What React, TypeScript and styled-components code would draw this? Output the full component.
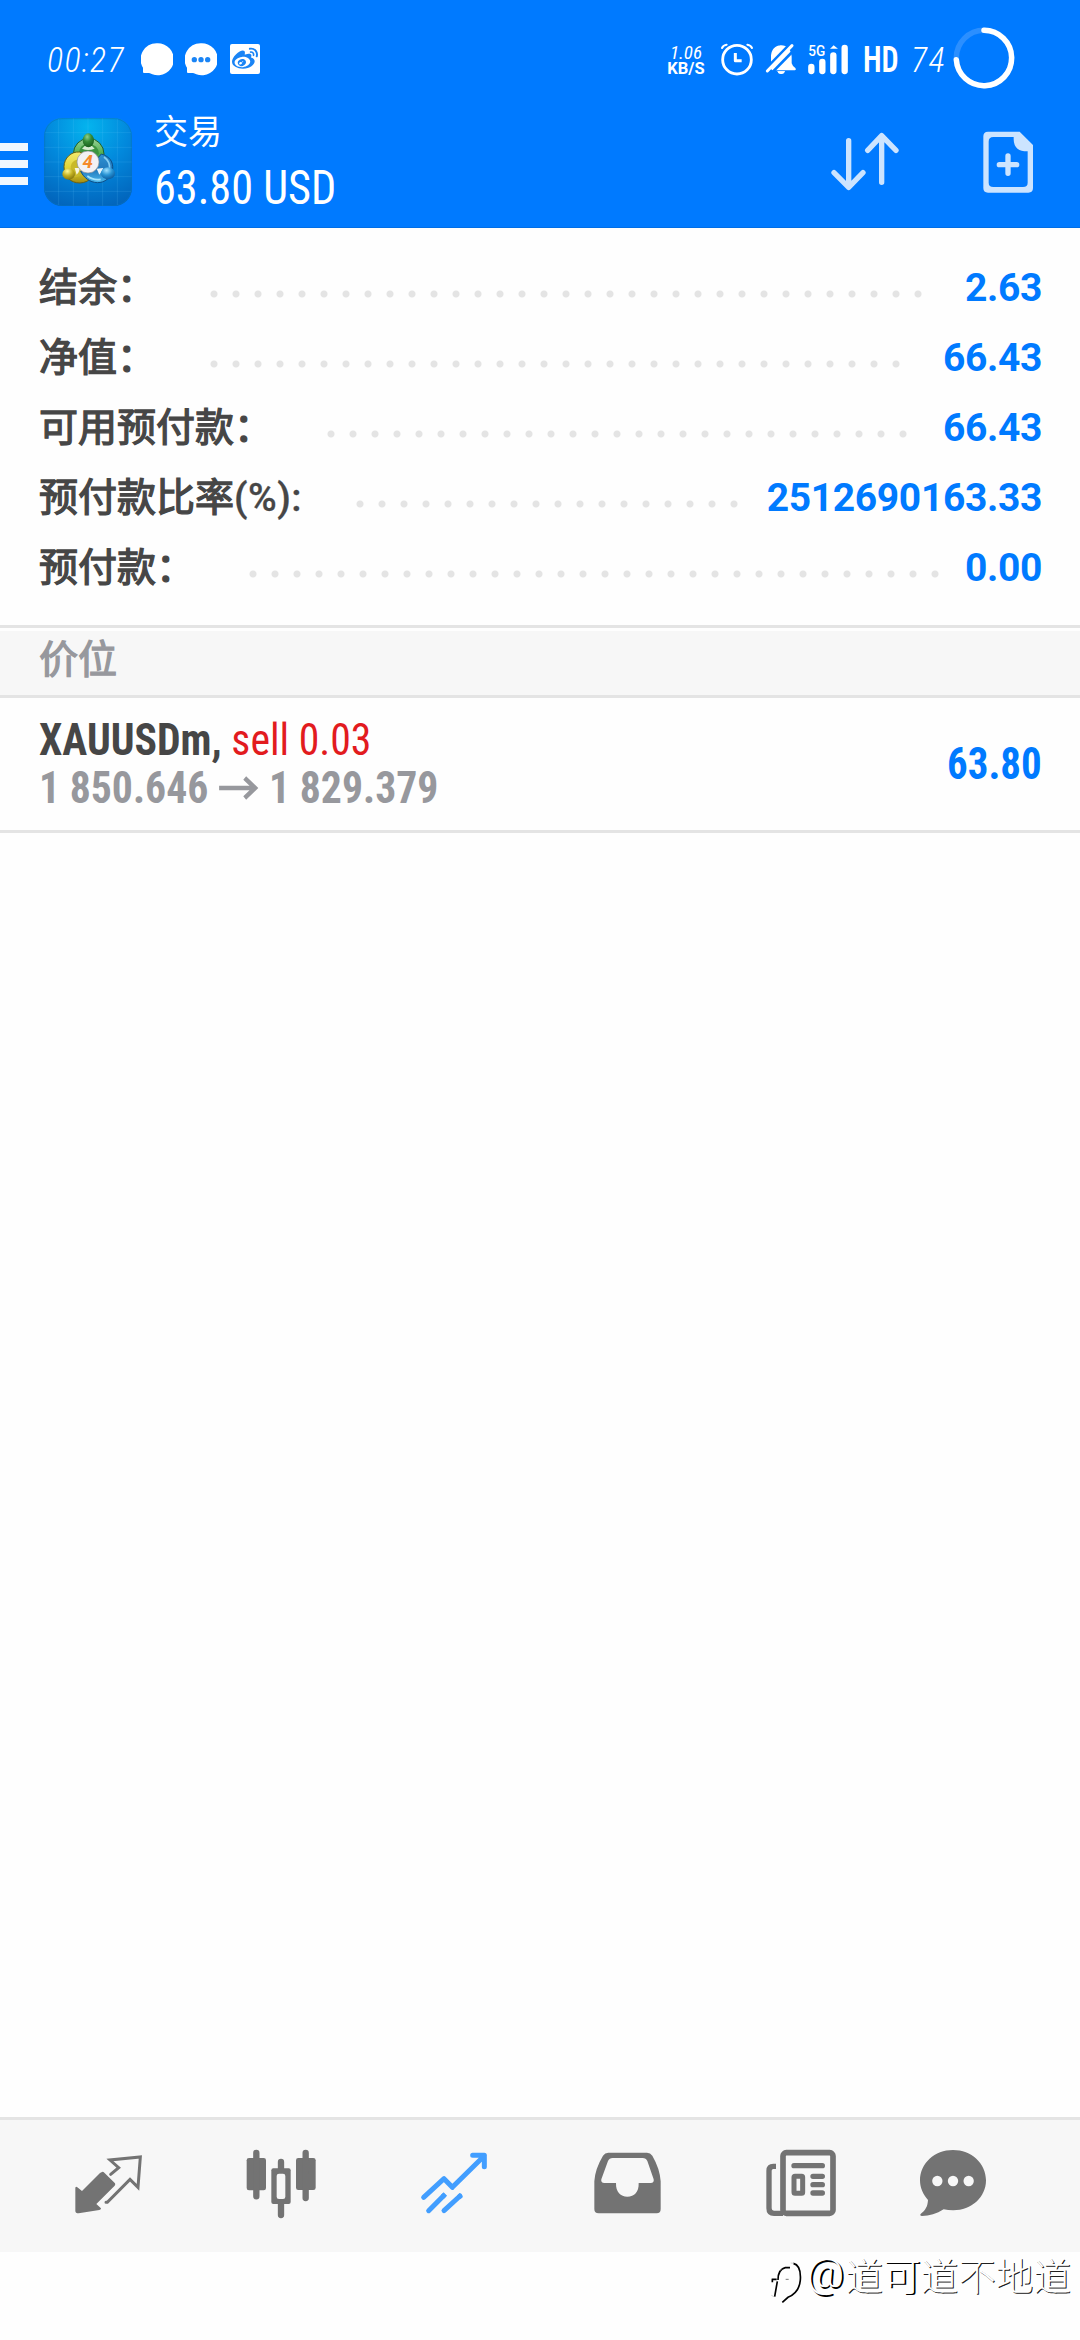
import React from 'react';
import styled, { createGlobalStyle } from 'styled-components';
import { FaWeibo } from 'react-icons/fa6';

const GlobalStyle = createGlobalStyle`
  * { box-sizing: border-box; }
  body { margin: 0; background: #fff; }
`;

const Screen = styled.div`
  display: flex;
  flex-direction: column;
  width: 1080px;
  height: 2340px;
  overflow: hidden;
  background: #fefefe;
  font-family: Roboto, 'Noto Sans CJK SC', sans-serif;
`;

const Header = styled.header`
  height: 228px;
  background: #007aff;
  border-bottom: 1px solid #006ee6;
  color: #fff;
`;

const StatusBar = styled.div`
  display: flex;
  align-items: center;
  height: 118px;
  padding-left: 47px;
`;

const Clock = styled.span<{ $width: number; $gap?: number }>`
  flex: none;
  width: ${p => p.$width}px;
  margin: 2px 0 0 ${p => p.$gap ?? 0}px;
  font: italic 300 34px/1 'Roboto Condensed', Roboto, sans-serif;
  font-stretch: 75%;
  letter-spacing: 1.4px;
  white-space: nowrap;
`;

const Glyph = styled.svg<{ $gap?: number }>`
  display: block;
  flex: none;
  margin-left: ${p => p.$gap ?? 0}px;
`;

const WeiboTile = styled.span`
  display: flex;
  flex: none;
  align-items: center;
  justify-content: center;
  width: 30px;
  height: 30px;
  margin-left: 13px;
  border-radius: 2px;
  background: #fff;
  color: #1a84f5;
`;

const NetSpeed = styled.div`
  display: flex;
  flex: none;
  flex-direction: column;
  align-items: center;
  width: 40px;
  margin: 3px 0 0 406px;
  font: 700 16.5px/15px Roboto, sans-serif;
`;

const SpeedValue = styled.span`
  font: italic 400 19px/16px 'Roboto Condensed', Roboto, sans-serif;
  font-stretch: 75%;
`;

const HdLabel = styled.span`
  flex: none;
  width: 36px;
  margin: 2px 0 0 13px;
  font: 600 36px/1 'Roboto Condensed', Roboto, sans-serif;
  font-stretch: 75%;
  transform: scaleX(0.84);
  transform-origin: left;
`;

const AppBar = styled.div`
  display: flex;
  height: 109px;
`;

const MenuBars = styled.div`
  display: flex;
  flex-direction: column;
  gap: 9px;
  width: 28px;
  padding-top: 25px;
`;

const MenuBar = styled.span`
  height: 8px;
  background: #f0f7ff;
`;

const Titles = styled.div`
  display: flex;
  flex-direction: column;
  width: 600px;
  margin-left: 22px;
`;

const ScreenName = styled.span`
  height: 46px;
  font: 400 34px/24px 'Noto Sans CJK SC', sans-serif;
`;

const Condensed = styled.span<{ $size: number; $weight: number; $color?: string; $squeeze?: number; $origin?: string }>`
  display: inline-block;
  font: ${p => p.$weight} ${p => p.$size}px/1 'Roboto Condensed', Roboto, sans-serif;
  font-stretch: 75%;
  color: ${p => p.$color ?? 'inherit'};
  white-space: pre;
  transform: scaleX(${p => p.$squeeze ?? 1});
  transform-origin: ${p => p.$origin ?? 'left'};
`;

const Summary = styled.section`
  display: flex;
  flex-direction: column;
  height: 397px;
  padding: 24px 38px 0 39px;
`;

const SummaryRow = styled.div`
  display: flex;
  align-items: center;
  height: 70px;
  font-size: 39px;
  line-height: 70px;
`;

const Label = styled.span`
  margin-top: 2px;
  color: #464646;
  font-weight: 400;
  -webkit-text-stroke: 1.3px #464646;
  white-space: nowrap;
`;

const Unit = styled.span`
  font-weight: 500;
  letter-spacing: 0.5px;
  -webkit-text-stroke: 0.3px #464646;
`;

const Dots = styled.span<{ $count: number }>`
  width: ${p => p.$count * 22}px;
  height: 8px;
  margin: 14px 0 0 47px;
  background: radial-gradient(circle at center, #e4e4e4 3px, transparent 4px) 0 0 / 22px 8px repeat-x;
`;

const Value = styled.span`
  margin: 2px 0 0 auto;
  color: #007aff;
  font-weight: 700;
  letter-spacing: -0.35px;
`;

const SectionHead = styled.div`
  height: 73px;
  padding: 3px 0 0;
  border-top: 3px solid #e4e4e4;
  border-bottom: 3px solid #e4e4e4;
`;

const SectionTitle = styled.div`
  height: 64px;
  padding-left: 39px;
  background: #f7f7f7;
  color: #97989d;
  font: 400 39px/50px 'Noto Sans CJK SC', sans-serif;
  -webkit-text-stroke: 1.3px #97989d;
`;

const Position = styled.div`
  display: flex;
  align-items: center;
  justify-content: space-between;
  height: 135px;
  padding: 0 38px 0 39px;
  border-bottom: 3px solid #e4e4e4;
`;

const PositionInfo = styled.div`
  display: flex;
  flex-direction: column;
  gap: 3px;
`;

const InfoLine = styled.div`
  display: flex;
  align-items: center;
  height: 45px;
  transform: scaleX(0.948);
  transform-origin: left;
`;

const Blank = styled.main`
  flex: 1;
`;

const Nav = styled.nav`
  display: flex;
  align-items: flex-start;
  height: 135px;
  padding: 26px 0 0 72px;
  border-top: 3px solid #e4e4e4;
  background: #f7f7f7;
`;

const Footer = styled.footer`
  display: flex;
  align-items: flex-start;
  justify-content: flex-end;
  height: 88px;
  padding: 0 9px 0 0;
  background: #fefefe;
`;

const Watermark = styled.span`
  display: flex;
  font: 300 37.6px/44px 'Noto Sans CJK SC', sans-serif;
  color: #fff;
  text-shadow: 1px 1px 0.5px rgba(0, 0, 0, 0.9);
  white-space: nowrap;
`;

const AtSign = styled.span`
  width: 39px;
  font: 300 41px/42px Roboto, sans-serif;
  text-shadow: 2px 1.5px 0.5px #000;
`;

const Deep = styled.span`
  text-shadow: 1.6px 1.2px 0.5px #000;
`;

const rows = [
  { label: '结余：', unit: '', value: '2.63', dots: 33 },
  { label: '净值：', unit: '', value: '66.43', dots: 32 },
  { label: '可用预付款：', unit: '', value: '66.43', dots: 27 },
  { label: '预付款比率', unit: '(%):', value: '2512690163.33', dots: 18 },
  { label: '预付款：', unit: '', value: '0.00', dots: 32 },
];

const GREY = '#737373';

function Logo() {
  return (
    <Glyph $gap={16} width="88" height="88" viewBox="132 294 264 264">
      <defs>
        <radialGradient id="bg" cx="0.5" cy="0.1" r="0.95">
          <stop offset="0" stopColor="#04b4ee" />
          <stop offset="0.5" stopColor="#0288dc" />
          <stop offset="1" stopColor="#0264bb" />
        </radialGradient>
        <linearGradient id="gr" x1="0" y1="0" x2="0" y2="1">
          <stop offset="0" stopColor="#9ad29a" />
          <stop offset="0.5" stopColor="#4fae4c" />
          <stop offset="1" stopColor="#257a28" />
        </linearGradient>
        <linearGradient id="ye" x1="0" y1="0" x2="0" y2="1">
          <stop offset="0" stopColor="#f2ea70" />
          <stop offset="0.6" stopColor="#ddd02c" />
          <stop offset="1" stopColor="#a18a12" />
        </linearGradient>
        <linearGradient id="bl" x1="0" y1="0" x2="0" y2="1">
          <stop offset="0" stopColor="#2f92d2" />
          <stop offset="0.55" stopColor="#2178bd" />
          <stop offset="1" stopColor="#4ab8ec" />
        </linearGradient>
        <radialGradient id="gb" cx="0.4" cy="0.25" r="0.8">
          <stop offset="0" stopColor="#8fd08c" />
          <stop offset="0.45" stopColor="#348b38" />
          <stop offset="1" stopColor="#15591b" />
        </radialGradient>
        <radialGradient id="yb" cx="0.4" cy="0.25" r="0.8">
          <stop offset="0" stopColor="#fff995" />
          <stop offset="0.5" stopColor="#c2b022" />
          <stop offset="1" stopColor="#80700b" />
        </radialGradient>
        <radialGradient id="bb" cx="0.4" cy="0.25" r="0.8">
          <stop offset="0" stopColor="#9fe0ff" />
          <stop offset="0.5" stopColor="#2793d4" />
          <stop offset="1" stopColor="#0b5698" />
        </radialGradient>
      </defs>
      <rect x="132" y="294" width="264" height="264" rx="54" fill="url(#bg)" />
      <rect x="134" y="296" width="260" height="260" rx="52" fill="none" stroke="#0872bd" strokeOpacity="0.6" strokeWidth="3" />
      <path d="M176 297V555M220 295V557M264 295V557M308 295V557M352 297V555M135 338H393M133 382H395M133 426H395M133 470H395M135 514H393" stroke="#6fd0ff" strokeOpacity="0.15" strokeWidth="3" />
      <ellipse cx="266" cy="402" rx="46" ry="47" fill="url(#gr)" stroke="#1f5f2a" strokeWidth="3" />
      <path d="M236 400Q240 372 264 372Q296 374 297 402L264 420Z" fill="#3c9440" />
      <path d="M246 386Q264 394 284 386L276 378H254Z" fill="#d5ecd0" />
      <path d="M238 396C214 394 192 414 192 440C192 470 212 489 240 489C256 488 268 482 274 472L250 400Z" fill="url(#ye)" stroke="#6d6110" strokeWidth="3" />
      <path d="M212 452Q208 424 234 418L246 460Q232 478 216 468Z" fill="#c9b928" />
      <path d="M304 402C330 410 340 426 338 448C334 474 314 488 292 488C270 487 252 474 242 454L262 450Z" fill="url(#bl)" stroke="#0d4d86" strokeWidth="3" />
      <path d="M312 411Q330 424 329 446" fill="none" stroke="#86cdf3" strokeWidth="5" />
      <path d="M262 468Q280 482 302 478" fill="none" stroke="#a4e3fd" strokeWidth="5" />
      <path d="M224 444L240 444Q238 456 230 464Z" fill="#f6f4dd" />
      <path d="M290 446L310 444Q306 454 298 464Z" fill="#e6f4fb" />
      <ellipse cx="265" cy="361" rx="17" ry="21" fill="url(#gb)" />
      <ellipse cx="206" cy="462" rx="19" ry="17" fill="url(#yb)" />
      <ellipse cx="324" cy="460" rx="21" ry="18" fill="url(#bb)" />
      <circle cx="264" cy="426" r="33" fill="#f3f1f4" stroke="#8b8f97" strokeWidth="2" />
      <text x="263" y="445" textAnchor="middle" fontFamily="Roboto" fontWeight="700" fontStyle="italic" fontSize="56" fill="#f58a2b">4</text>
    </Glyph>
  );
}

function StatusIcons() {
  return (
    <>
      <Glyph $gap={20} width="32" height="34" viewBox="423 66 96 102" fill="#fff">
        <path d="M471 70a48 48 0 1 1-14 93c-5-3-9-4-14-4h-11q-3 0-3-3v-13A48 48 0 0 1 471 70Z" />
      </Glyph>
      <Glyph $gap={12} width="32" height="34" viewBox="555 66 96 102" fill="#fff">
        <path d="M603 70a48 48 0 1 1-14 93c-5-3-9-4-14-4h-11q-3 0-3-3v-13A48 48 0 0 1 603 70Z" />
        <g fill="#1a84f5">
          <circle cx="583" cy="119" r="8" />
          <circle cx="603" cy="119" r="8" />
          <circle cx="623" cy="119" r="8" />
        </g>
      </Glyph>
      <WeiboTile><FaWeibo size={26} /></WeiboTile>
    </>
  );
}

function SystemIcons() {
  return (
    <>
      <Glyph $gap={14} width="34" height="34" viewBox="240 96 102 102" fill="none" stroke="#fff" strokeLinecap="round">
        <circle cx="291" cy="149" r="43" strokeWidth="8.5" />
        <path d="M286 129V152H305" strokeWidth="9" strokeLinejoin="round" strokeLinecap="butt" />
        <path d="M246 114Q250 105 260 104M336 114Q332 105 322 104" strokeWidth="6" />
      </Glyph>
      <Glyph $gap={10} width="34" height="34" viewBox="372 96 102 102">
        <path d="M390 171Q393 168 393 162V143C393 108 418 106 424 106C440 106 454 118 455 140V160Q457 168 466 174Q470 180 464 181H396Z" fill="#fff" />
        <path d="M412 184h23a12 11 0 0 1-23 0Z" fill="#fff" />
        <path d="M372 186L460 96" stroke="#007aff" strokeWidth="14" />
        <path d="M388 196L474 108" stroke="#007aff" strokeWidth="8" />
        <path d="M412 184h23a12 11 0 0 1-23 0Z" fill="#fff" />
        <path d="M382 183L456 107" stroke="#fff" strokeWidth="9" strokeLinecap="round" />
      </Glyph>
      <Glyph $gap={8} width="44" height="34" viewBox="498 96 132 102" stroke="#fff" strokeLinecap="round">
        <path d="M514 171V183M547 156V183M580 136V183M614 114V183" strokeWidth="19" />
        <path d="M576 114L581 109L587 114Z" strokeWidth="5" fill="#fff" />
        <text x="505" y="137" fontFamily="Roboto" fontWeight="500" fontSize="44" textLength="51" lengthAdjust="spacingAndGlyphs" fill="#fff" stroke="none">5G</text>
      </Glyph>
    </>
  );
}

export default function App() {
  return (
    <Screen>
      <GlobalStyle />
      <Header>
        <StatusBar>
          <Clock $width={74}>00:27</Clock>
          <StatusIcons />
          <NetSpeed>
            <SpeedValue>1.06</SpeedValue>
            <span>KB/S</span>
          </NetSpeed>
          <SystemIcons />
          <HdLabel>HD</HdLabel>
          <Clock $width={40} $gap={12}>74</Clock>
          <Glyph $gap={1} width="64" height="64" viewBox="-32 -31 64 64" fill="none">
            <circle r="27.7" stroke="#2b8fff" strokeWidth="5.5" />
            <path d="M0 -27.7A27.7 27.7 0 1 1 -27.7 1.7" stroke="#fff" strokeWidth="5.5" strokeLinecap="round" />
          </Glyph>
        </StatusBar>
        <AppBar>
          <MenuBars><MenuBar /><MenuBar /><MenuBar /></MenuBars>
          <Logo />
          <Titles>
            <ScreenName>交易</ScreenName>
            <Condensed $size={48} $weight={400} $squeeze={0.922}>63.80 USD</Condensed>
          </Titles>
          <Glyph $gap={76} width="70" height="84" viewBox="570 324 210 252" fill="none" stroke="#cce4ff" strokeWidth="16" strokeLinecap="round" strokeLinejoin="round">
            <path d="M626 392V532M582 488L626 532L669 488M725 517V377M683 421L725 377L768 421" />
          </Glyph>
          <Glyph $gap={80} width="56" height="84" viewBox="1020 324 168 252" fill="#cce4ff">
            <path fillRule="evenodd" d="M1044 365H1139L1179 405V534Q1179 548 1165 548H1044Q1030 548 1030 534V379Q1030 365 1044 365ZM1060 381Q1046 381 1046 395V518Q1046 531 1060 531H1149Q1163 531 1163 518V424H1153Q1121 420 1121 388V381Z" />
            <path d="M1104 438V490M1078 464H1130" stroke="#cce4ff" strokeWidth="16" strokeLinecap="round" />
          </Glyph>
        </AppBar>
      </Header>

      <Summary>
        {rows.map(r => (
          <SummaryRow key={r.label}>
            <Label>{r.label}{r.unit && <Unit>{r.unit}</Unit>}</Label>
            <Dots $count={r.dots} />
            <Value>{r.value}</Value>
          </SummaryRow>
        ))}
      </Summary>

      <SectionHead>
        <SectionTitle>价位</SectionTitle>
      </SectionHead>

      <Position>
        <PositionInfo>
          <InfoLine>
            <Condensed $size={44} $weight={700} $color="#464646">XAUUSDm, </Condensed>
            <Condensed $size={44} $weight={400} $color="#e21b1e">sell 0.03</Condensed>
          </InfoLine>
          <InfoLine>
            <Condensed $size={44} $weight={700} $color="#97989d">1 850.646</Condensed>
            <Glyph $gap={11} width="43" height="24" viewBox="0 0 43 24" fill="none" stroke="#97989d" strokeWidth="4.5">
              <path d="M0 12H38M27 2L38 12L27 22" />
            </Glyph>
            <Condensed $size={44} $weight={700} $color="#97989d"> 1 829.379</Condensed>
          </InfoLine>
        </PositionInfo>
        <Condensed $size={44} $weight={700} $color="#007aff" $squeeze={0.93} $origin="right">63.80</Condensed>
      </Position>

      <Blank />

      <Nav>
        <Glyph width="72" height="76" viewBox="96 138 216 228" fill={GREY}>
          <path d="M186 216Q189 214 193 218L225 250Q227 254 224 257L169 312L183 325Q184 329 178 330L116 340Q106 340 106 332V263Q108 258 112 262L126 273L180 219Z" />
          <path d="M212 223L236 203L210 180L301 171L294 262L270 238L202 307H198" fill="none" stroke={GREY} strokeWidth="9" strokeLinecap="round" />
        </Glyph>
        <Glyph $gap={101} width="72" height="76" viewBox="615 138 216 228" fill={GREY}>
          <rect x="620" y="174" width="58" height="97" rx="7" />
          <rect x="768" y="174" width="59" height="96" rx="7" />
          <path d="M649 159V289M797 159V294M723 186V210M723 310V345" stroke={GREY} strokeWidth="19" strokeLinecap="round" />
          <rect x="694" y="205" width="58" height="107" rx="6" />
          <rect x="710" y="221" width="26" height="76" rx="7" fill="#f7f7f7" />
        </Glyph>
        <Glyph $gap={101} width="72" height="76" viewBox="114 138 216 228" fill="none" stroke="#429eff" strokeWidth="15" strokeLinecap="round" strokeLinejoin="round">
          <path d="M131 292L192 236L217 262L313 167M278 166H313V200" />
          <path d="M146 332L190 288M192 332L240 288" />
          <path d="M188 290L196 282M236 292L244 285" strokeLinecap="butt" />
        </Glyph>
        <Glyph $gap={101} width="72" height="76" viewBox="633 138 216 228" fill={GREY}>
          <path fillRule="evenodd" d="M685 158H801Q811 158 817 167Q840 207 842 244V327Q842 340 830 340H656Q643 340 643 327V244Q645 207 669 167Q675 158 685 158ZM698 174Q688 174 684 183L664 238Q662 249 673 249H708C707 276 722 290 742 290C763 290 777 276 776 249H812Q823 249 821 238L802 183Q798 174 788 174Z" />
        </Glyph>
        <Glyph $gap={101} width="72" height="76" viewBox="132 138 216 228" fill="none" stroke={GREY}>
          <rect x="189" y="158" width="150" height="182" rx="10" strokeWidth="17" />
          <path d="M189 340H162Q147 340 147 325V212Q147 199 160 199H168" strokeWidth="16" />
          <path d="M222 197H307M279 229H307M279 254H307M279 279H307" strokeWidth="16" strokeLinecap="round" />
          <rect x="222" y="229" width="26" height="51" rx="3" strokeWidth="15" />
        </Glyph>
        <Glyph $gap={81} width="72" height="76" viewBox="591 138 216 228">
          <path d="M699 150C754 150 798 190 798 241C798 292 754 331 700 331Q684 331 671 328C650 342 628 348 606 348Q598 347 602 342C616 331 623 320 624 300C609 284 600 263 600 241C600 190 644 150 699 150Z" fill={GREY} />
          <g fill="#f7f7f7">
            <circle cx="652" cy="243" r="15.5" />
            <circle cx="699" cy="243" r="15.5" />
            <circle cx="746" cy="243" r="15.5" />
          </g>
        </Glyph>
      </Nav>

      <Footer>
        <Glyph width="38" height="60" viewBox="27 36 114 180" fill="none" stroke="#000" strokeWidth="5">
          <path d="M35 118H50M37 118V127M52 124L44 170M54 120Q54 88 76 83H90" />
          <path d="M100 70Q124 76 121 120Q118 158 84 172L67 187" />
          <path d="M77 118H86" stroke="#777" strokeWidth="3" />
          <path d="M34 166L42 170M92 69L102 70M60 92L66 84" stroke="#bbb" strokeWidth="2" />
        </Glyph>
        <Watermark><AtSign>@</AtSign>道<Deep>可</Deep>道不地道</Watermark>
      </Footer>
    </Screen>
  );
}
